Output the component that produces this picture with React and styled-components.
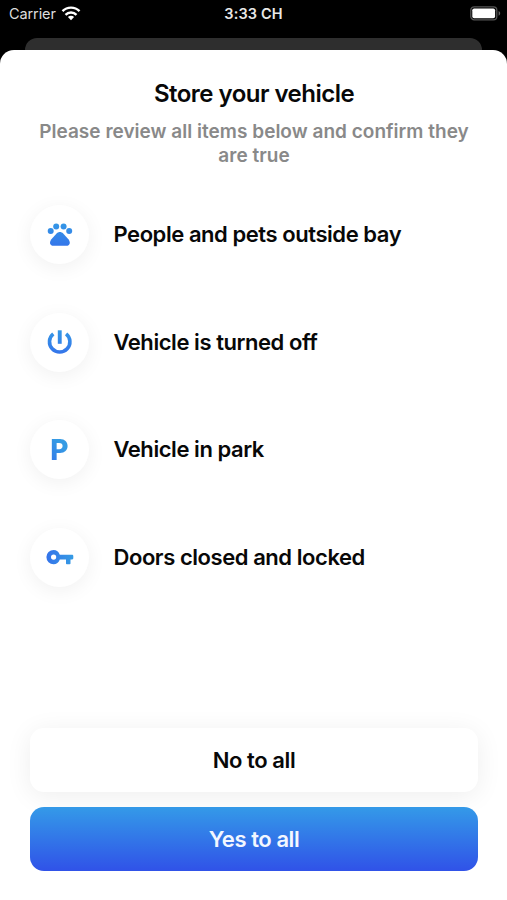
import styled, { createGlobalStyle } from "styled-components";

const items = [
  { id: "pets", label: "People and pets outside bay" },
  { id: "power", label: "Vehicle is turned off" },
  { id: "park", label: "Vehicle in park" },
  { id: "key", label: "Doors closed and locked" },
];

const ItemIcon = ({ id }) => {
  if (id === "park") return <ParkLetter>P</ParkLetter>;
  const fill = `url(#${id}-gradient)`;
  const isKey = id === "key";
  return (
    <svg width='30' height='30' viewBox='0 0 30 30'>
      <defs>
        <linearGradient
          id={`${id}-gradient`}
          gradientUnits='userSpaceOnUse'
          x1={isKey ? "2" : "15"}
          y1={isKey ? "15" : "3"}
          x2={isKey ? "28" : "15"}
          y2={isKey ? "15" : "27"}
        >
          <stop offset='0' stopColor={isKey ? "#3474ea" : "#3498e6"} />
          <stop offset='1' stopColor={isKey ? "#359be4" : "#3474ea"} />
        </linearGradient>
      </defs>
      {id === "pets" && (
        <g fill={fill}>
          <circle cx='5.7' cy='11.1' r='3' />
          <circle cx='11.2' cy='6.6' r='3' />
          <circle cx='18.6' cy='6.6' r='3' />
          <circle cx='24.2' cy='11.1' r='3' />
          <path d='M11.6 13.5C13.5 11.5 16.3 11.5 18.2 13.5L23.4 19.2C26 22.4 24.8 25.8 21.4 25.8H8.4C5 25.8 3.8 22.4 6.4 19.2Z' />
        </g>
      )}
      {id === "power" && (
        <g fill={fill}>
          <rect x='12.8' y='3.3' width='3.9' height='13.5' />
          <path
            d='M8.3 6.9A10.2 10.2 0 1 0 21.1 6.9'
            fill='none'
            stroke={fill}
            strokeWidth='3.6'
          />
        </g>
      )}
      {isKey && (
        <path
          fill={fill}
          fillRule='evenodd'
          d='M14.8 12.8C13.9 9.8 11.5 7.9 8.6 7.9A7.2 7.2 0 0 0 8.6 22.3C11.5 22.3 13.9 20.3 14.8 17.4H21V21.5Q21 22.3 21.8 22.3H24.7Q25.5 22.3 25.5 21.5V17.4H27.2Q28.3 17.4 28.3 16.3V13.9Q28.3 12.8 27.2 12.8ZM8.6 12.5A2.6 2.6 0 1 1 8.6 17.7A2.6 2.6 0 1 1 8.6 12.5Z'
        />
      )}
    </svg>
  );
};

const StatusBar = () => (
  <Status>
    <Carrier>
      Carrier
      <svg width='20' height='15' viewBox='0 0 20 15'>
        <path d='M10 14.2L6.9 11.1A4.4 4.4 0 0 1 13.1 11.1Z' fill='#fff' />
        <path
          d='M4.5 8.8A7.8 7.8 0 0 1 15.5 8.8M1.5 5.2A12 12 0 0 1 18.5 5.2'
          fill='none'
          stroke='#fff'
          strokeWidth='2.4'
        />
      </svg>
    </Carrier>
    <Time>3:33 CH</Time>
    <Battery width='31' height='15' viewBox='0 0 31 15'>
      <rect x='.8' y='.8' width='26' height='13' rx='3.4' fill='none' stroke='#555' strokeWidth='1.3' />
      <rect x='2.3' y='2.4' width='22.8' height='9.8' rx='1.8' fill='#fff' />
      <path d='M28.6 5.1C30.7 6 30.7 8.8 28.6 9.7Z' fill='#666' />
    </Battery>
  </Status>
);

const App = () => (
  <>
    <GlobalStyle />
    <Screen>
      <StatusBar />
      <BackCard />
      <Sheet>
        <Title>Store your vehicle</Title>
        <Subtitle>
          Please review all items below and confirm they
          <br />
          are true
        </Subtitle>
        <List>
          {items.map((item) => (
            <Item key={item.id}>
              <IconCircle>
                <ItemIcon id={item.id} />
              </IconCircle>
              <Label>{item.label}</Label>
            </Item>
          ))}
        </List>
        <Actions>
          <Button>No to all</Button>
          <Button $primary>Yes to all</Button>
        </Actions>
      </Sheet>
    </Screen>
  </>
);

const GlobalStyle = createGlobalStyle`
  * {
    box-sizing: border-box;
  }
  body {
    margin: 0;
    background: #000;
    font-family: Inter, "Liberation Sans", sans-serif;
  }
`;

const Screen = styled.div`
  display: flex;
  flex-direction: column;
  width: 507px;
  height: 900px;
  overflow: hidden;
  background: #000;
`;

const Status = styled.header`
  display: grid;
  grid-template-columns: 1fr auto 1fr;
  align-items: center;
  height: 27px;
  margin-bottom: 11px;
  padding: 0 6px 0 9px;
  color: #ddd;
  font-size: 14.5px;
`;

const Carrier = styled.span`
  display: flex;
  align-items: center;
  gap: 5px;
  letter-spacing: -0.1px;
`;

const Time = styled.span`
  margin-right: 3px;
  color: #e8e8e8;
  font-weight: 600;
  letter-spacing: 0.15px;
`;

const Battery = styled.svg`
  justify-self: end;
`;

const BackCard = styled.div`
  flex: none;
  height: 12px;
  margin: 0 25px;
  border-radius: 12px 12px 0 0;
  background: #2e2e2e;
`;

const Sheet = styled.main`
  display: flex;
  flex: 1;
  flex-direction: column;
  padding: 29px 29px 29px 30px;
  border-radius: 14px 14px 0 0;
  background: #fff;
`;

const Title = styled.h1`
  margin: 0;
  color: #080808;
  font-size: 24px;
  font-weight: 600;
  line-height: 30px;
  letter-spacing: -0.52px;
  text-align: center;
`;

const Subtitle = styled.p`
  margin: 11px 0 0;
  color: #898989;
  font-size: 19px;
  font-weight: 600;
  line-height: 24px;
  letter-spacing: 0.02px;
  text-align: center;
  white-space: nowrap;
`;

const List = styled.ul`
  display: flex;
  flex-direction: column;
  gap: 48.5px;
  margin: 37px 0 0;
  padding: 0;
  list-style: none;
`;

const Item = styled.li`
  display: flex;
  align-items: center;
  gap: 24.5px;
  height: 59px;
`;

const IconCircle = styled.div`
  display: flex;
  align-items: center;
  justify-content: center;
  width: 59px;
  height: 59px;
  border-radius: 50%;
  background: #fff;
  box-shadow: 0 4px 20px rgba(0, 0, 0, 0.06);
`;

const ParkLetter = styled.span`
  background: linear-gradient(45deg, #3474ea, #359be4 65%);
  background-clip: text;
  color: transparent;
  font-size: 28px;
  font-weight: 800;
  line-height: 30px;
`;

const Label = styled.span`
  margin-bottom: 1px;
  color: #080808;
  font-size: 22px;
  font-weight: 600;
  letter-spacing: -0.44px;
  white-space: nowrap;
`;

const Actions = styled.div`
  display: flex;
  flex-direction: column;
  gap: 15px;
  margin-top: auto;
`;

const Button = styled.button`
  position: relative;
  height: 64px;
  padding: 0;
  border: 0;
  border-radius: 14px;
  background: ${({ $primary }) =>
    $primary ? "linear-gradient(#349ae8, #3052e8)" : "#fff"};
  box-shadow: ${({ $primary }) =>
    $primary ? "none" : "0 4px 27px rgba(0, 0, 0, 0.07)"};
  color: ${({ $primary }) => ($primary ? "#f3f7ff" : "#080808")};
  font-family: inherit;
  font-size: 22px;
  font-weight: 600;
  letter-spacing: -0.42px;
`;

export default App;
